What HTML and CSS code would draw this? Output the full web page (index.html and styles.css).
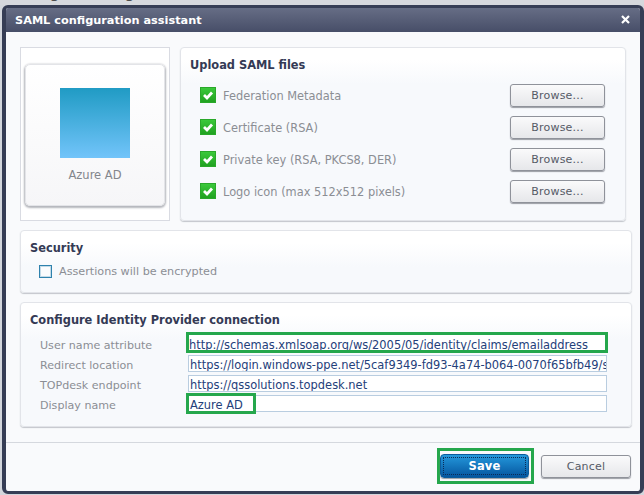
FILE: index.html
```html
<!DOCTYPE html>
<html lang="en">
<head>
<meta charset="utf-8">
<title>SAML configuration assistant</title>
<link rel="stylesheet" href="styles.css">
</head>
<body>
<div class="backdrop">
  <div class="behind">Login settings</div>
</div>
<div class="dialog">
  <header class="titlebar">
    <span class="title">SAML configuration assistant</span>
    <svg class="close" width="9" height="9" viewBox="0 0 9 9"><path d="M1 1 L8 8 M8 1 L1 8" stroke="#fff" stroke-width="2.2"/></svg>
  </header>
  <div class="content">
    <div class="top-row">
      <div class="logo-panel">
        <div class="logo-card">
          <div class="logo-square"></div>
          <div class="logo-label">Azure AD</div>
        </div>
      </div>
      <section class="panel upload">
        <h2 class="panel-title">Upload SAML files</h2>
        <div class="file-list">
          <div class="file-row">
            <span class="check"><svg width="16" height="16" viewBox="0 0 16 16"><path d="M4 8 L7 11 L12 5.5" fill="none" stroke="#fff" stroke-width="2.8"/></svg></span>
            <span class="file-label">Federation Metadata</span>
            <button class="btn browse">Browse...</button>
          </div>
          <div class="file-row">
            <span class="check"><svg width="16" height="16" viewBox="0 0 16 16"><path d="M4 8 L7 11 L12 5.5" fill="none" stroke="#fff" stroke-width="2.8"/></svg></span>
            <span class="file-label">Certificate (RSA)</span>
            <button class="btn browse">Browse...</button>
          </div>
          <div class="file-row">
            <span class="check"><svg width="16" height="16" viewBox="0 0 16 16"><path d="M4 8 L7 11 L12 5.5" fill="none" stroke="#fff" stroke-width="2.8"/></svg></span>
            <span class="file-label">Private key (RSA, PKCS8, DER)</span>
            <button class="btn browse">Browse...</button>
          </div>
          <div class="file-row">
            <span class="check"><svg width="16" height="16" viewBox="0 0 16 16"><path d="M4 8 L7 11 L12 5.5" fill="none" stroke="#fff" stroke-width="2.8"/></svg></span>
            <span class="file-label">Logo icon (max 512x512 pixels)</span>
            <button class="btn browse">Browse...</button>
          </div>
        </div>
      </section>
    </div>
    <section class="panel security">
      <h2 class="panel-title">Security</h2>
      <div class="check-row">
        <span class="checkbox"></span>
        <span class="file-label encrypted">Assertions will be encrypted</span>
      </div>
    </section>
    <section class="panel connection">
      <h2 class="panel-title">Configure Identity Provider connection</h2>
      <div class="fields">
        <div class="field"><span class="field-label">User name attribute</span><div class="input marked">http://schemas.xmlsoap.org/ws/2005/05/identity/claims/emailaddress</div></div>
        <div class="field"><span class="field-label">Redirect location</span><div class="input">https://login.windows-ppe.net/5caf9349-fd93-4a74-b064-0070f65bfb49/saml2</div></div>
        <div class="field"><span class="field-label">TOPdesk endpoint</span><div class="input">https://qssolutions.topdesk.net</div></div>
        <div class="field"><span class="field-label">Display name</span><div class="input named"><span class="marked-name">Azure AD</span></div></div>
      </div>
    </section>
  </div>
  <footer class="footer">
    <div class="save-mark"><button class="btn save">Save</button></div>
    <button class="btn cancel">Cancel</button>
  </footer>
</div>
</body>
</html>
```
FILE: styles.css
```css
* { box-sizing: border-box; }
html, body { margin: 0; height: 495px; overflow: hidden; }
body {
  background: #d3d6dc;
  font-family: "DejaVu Sans", sans-serif;
  font-size: 11px;
  color: #8b8e94;
}
.backdrop { height: 5px; overflow: hidden; background: #d6d8dd; }
.behind {
  font-size: 16px;
  color: #4a4a4a;
  margin: -16px 0 0 31px;
  line-height: 18px;
}
.dialog {
  margin-left: 2px;
  width: 642px;
  height: 489px;
  background: #f9fafc;
  border: solid #363d55;
  border-width: 3px 4px 3px 4px;
  border-radius: 6px;
  display: flex;
  flex-direction: column;
  overflow: hidden;
}
.titlebar {
  height: 24px;
  flex: none;
  background: linear-gradient(#666d85, #474e68);
  color: #fff;
  display: flex;
  align-items: center;
  justify-content: space-between;
  padding: 1px 10px 0 9px;
  font-weight: bold;
  font-size: 11.3px;
}
.close { display: block; margin-bottom: 2px; }
.content {
  flex: 1;
  padding: 15px 8px 0 14px;
  display: flex;
  flex-direction: column;
  gap: 9px;
}
.top-row { display: flex; gap: 10px; height: 174px; }
.logo-panel {
  width: 150px;
  background: #fff;
  border: 1px solid #d9dbe2;
  padding: 16px 4px 0;
}
.logo-card {
  height: 142px;
  background: linear-gradient(#fff, #f6f6f8);
  border: 1px solid #e3e4e8;
  border-radius: 5px;
  box-shadow: 0 1px 2px 1px #b4b6bc;
  display: flex;
  flex-direction: column;
  align-items: center;
  padding-top: 23px;
}
.logo-square {
  width: 70px;
  height: 70px;
  background: linear-gradient(#209bc4, #72c4fa);
}
.logo-label { margin-top: 9px; line-height: 16px; color: #83868c; font-size: 11.5px; }
.panel {
  background: linear-gradient(#fff 0, #fff 12px, #f7f9fc 36px);
  border: 1px solid #e2e4e9;
  border-radius: 4px;
  box-shadow: 0 1px 1px #c2c5cb;
}
.upload { flex: 0 0 446px; padding: 9px 9px 0; }
.panel-title {
  margin: 0;
  font-size: 11.4px;
  line-height: 16px;
  font-weight: bold;
  color: #343a55;
}
.file-list { margin-top: 10px; display: flex; flex-direction: column; gap: 8px; }
.file-row { display: flex; align-items: center; height: 24px; padding-left: 10px; }
.check {
  flex: none;
  display: block;
  width: 16px;
  height: 16px;
  margin-right: 7px;
  background: linear-gradient(#3ccb3c, #1f9f1f);
  box-shadow: inset 0 0 0 1px #2aa82a;
}
.check svg { display: block; }
.file-label { flex: 1; color: #8b8e94; padding-top: 2px; font-size: 11.4px; }
.encrypted { font-size: 11.2px; padding-top: 0; }
.btn {
  font-family: inherit;
  font-size: 11px;
  color: #555a66;
  border: 1px solid #8f929a;
  border-radius: 3px;
  background: linear-gradient(#fafafb, #e6e7ea);
  box-shadow: 0 1px 1px #9a9da4;
  padding: 0;
  letter-spacing: 0.2px;
}
.browse { width: 95px; height: 23px; margin-right: 11px; }
.security { height: 63px; padding: 9px 9px 0; }
.check-row { display: flex; align-items: center; margin: 9px 0 0 9px; gap: 7px; }
.checkbox {
  width: 13px;
  height: 13px;
  border: 1px solid #2f82ad;
  box-shadow: inset 0 0 0 1px #c4dbe8;
  background: #fbfcfd;
}
.connection { height: 125px; padding: 9px 9px 0; }
.fields { margin-top: 7px; display: flex; flex-direction: column; gap: 3px; }
.field { display: flex; align-items: center; height: 17px; padding-left: 10px; }
.field-label { width: 148px; flex: none; padding-top: 4px; font-size: 11.1px; }
.input {
  width: 419px;
  height: 17px;
  background: #fff;
  border: 1px solid #b9cde0;
  color: #24407a;
  line-height: 16px;
  padding: 1px 0 0 1px;
  white-space: nowrap;
  overflow: hidden;
  font-size: 11.45px;
}
.marked {
  align-self: flex-start;
  width: 422px;
  height: 21px;
  margin: -3px -1px 0 -2px;
  border: 3px solid #25a74c;
  padding: 2px 0 0;
}
.named { overflow: visible; }
.marked-name {
  display: block;
  width: 70px;
  height: 21px;
  margin: -4px 0 0 -4px;
  border: 3px solid #25a74c;
  padding: 1px 0 0 1px;
  line-height: 16px;
}
.footer {
  height: 49px;
  flex: none;
  border-top: 1px solid #d5d8de;
  display: flex;
  justify-content: flex-end;
  align-items: flex-start;
  gap: 7px;
  padding: 5px 9px 0 0;
}
.save-mark {
  width: 97px;
  height: 36px;
  border: 3px solid #25a74c;
  padding: 3px 0 0;
}
.save {
  display: block;
  width: 89px;
  height: 24px;
  color: #fff;
  font-weight: bold;
  font-size: 11.5px;
  background: linear-gradient(#2498dc, #05569f);
  border: 1px solid #0b5c9c;
  border-radius: 4px;
  outline: 1px dotted #0b2c57;
  outline-offset: -4px;
}
.cancel { width: 90px; height: 23px; margin-top: 7px; }
```
